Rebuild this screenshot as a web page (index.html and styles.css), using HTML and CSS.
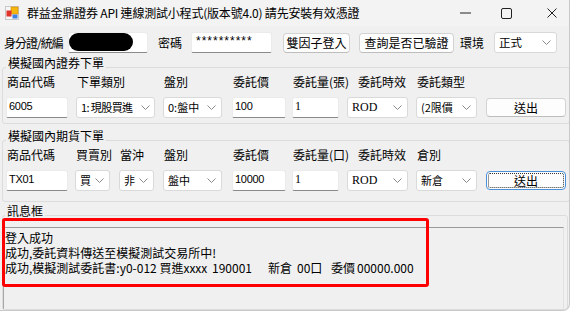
FILE: index.html
```html
<!DOCTYPE html>
<html lang="zh-Hant">
<head>
  <meta charset="UTF-8" />
  <title>群益金鼎證券 API 連線測試小程式</title>
  <link rel="stylesheet" href="styles.css">
</head>
<body>

  <div class="window">
    <div class="titlebar">
      <svg class="app-icon" width="14" height="14" viewBox="0 0 14 14">
        <rect x="0.5" y="0.5" width="13" height="13" fill="#f7f7f7" stroke="#c8c8c8"/>
        <rect x="6" y="1" width="7" height="7" fill="#f6b40e" stroke="#d98c00" stroke-width="0.6"/>
        <rect x="1.5" y="4.5" width="5" height="6" fill="#e0332b"/>
        <rect x="7.5" y="8.5" width="5" height="4" fill="#3f7fe0"/>
      </svg>
      <span class="title">群益金鼎證券 API 連線測試小程式(版本號4.0) 請先安裝有效憑證</span>
      <div class="win-controls">
        <span class="win-btn win-min">
          <svg width="11" height="2" viewBox="0 0 11 2"><line x1="0" y1="1" x2="11" y2="1" stroke="#222" stroke-width="1"/></svg>
        </span>
        <span class="win-btn win-max">
          <svg width="11" height="11" viewBox="0 0 11 11"><rect x="0.5" y="0.5" width="10" height="10" rx="1.5" fill="none" stroke="#222"/></svg>
        </span>
        <span class="win-btn win-close">
          <svg width="10" height="10" viewBox="0 0 10 10"><path d="M0.5 0.5 L9.5 9.5 M9.5 0.5 L0.5 9.5" stroke="#222" stroke-width="1"/></svg>
        </span>
      </div>
    </div>

    <div class="login-row">
      <span class="login-label id-label">身分證/統編</span>
      <div class="textbox id-box"><span class="redact"></span></div>
      <span class="login-label pw-label">密碼</span>
      <div class="textbox pw-box">**********</div>
      <button class="btn btn-2fa">雙因子登入</button>
      <button class="btn btn-check">查詢是否已驗證</button>
      <span class="login-label env-label">環境</span>
      <div class="combo env-combo">
        <span>正式</span>
        <svg width="9" height="5" viewBox="0 0 9 5"><polyline points="0.5,0.5 4.5,4.5 8.5,0.5" fill="none" stroke="#8a8a8a"/></svg>
      </div>
    </div>

    <fieldset class="group group-stock">
      <legend>模擬國內證券下單</legend>
      <div class="order-grid stock-grid">
        <span class="col-label">商品代碼</span>
        <span class="col-label">下單類別</span>
        <span class="col-label">盤別</span>
        <span class="col-label">委託價</span>
        <span class="col-label">委託量(張)</span>
        <span class="col-label shifted">委託時效</span>
        <span class="col-label">委託類型</span>
        <span></span>

        <div class="textbox num f-code">6005</div>
        <div class="combo f-type">
          <span>1: 現股買進</span>
          <svg width="9" height="5" viewBox="0 0 9 5"><polyline points="0.5,0.5 4.5,4.5 8.5,0.5" fill="none" stroke="#8a8a8a"/></svg>
        </div>
        <div class="combo f-session">
          <span>0:盤中</span>
          <svg width="9" height="5" viewBox="0 0 9 5"><polyline points="0.5,0.5 4.5,4.5 8.5,0.5" fill="none" stroke="#8a8a8a"/></svg>
        </div>
        <div class="textbox num f-price">100</div>
        <div class="textbox serif f-qty">1</div>
        <div class="combo f-tif">
          <span class="serif">ROD</span>
          <svg width="9" height="5" viewBox="0 0 9 5"><polyline points="0.5,0.5 4.5,4.5 8.5,0.5" fill="none" stroke="#8a8a8a"/></svg>
        </div>
        <div class="combo f-kind">
          <span>(2限價</span>
          <svg width="9" height="5" viewBox="0 0 9 5"><polyline points="0.5,0.5 4.5,4.5 8.5,0.5" fill="none" stroke="#8a8a8a"/></svg>
        </div>
        <button class="btn btn-send">送出</button>
      </div>
    </fieldset>

    <fieldset class="group group-futures">
      <legend>模擬國內期貨下單</legend>
      <div class="order-grid futures-grid">
        <span class="col-label">商品代碼</span>
        <span class="col-label">買賣別</span>
        <span class="col-label">當沖</span>
        <span class="col-label">盤別</span>
        <span class="col-label">委託價</span>
        <span class="col-label">委託量(口)</span>
        <span class="col-label shifted">委託時效</span>
        <span class="col-label">倉別</span>
        <span></span>

        <div class="textbox num f-code">TX01</div>
        <div class="combo f-side">
          <span>買</span>
          <svg width="9" height="5" viewBox="0 0 9 5"><polyline points="0.5,0.5 4.5,4.5 8.5,0.5" fill="none" stroke="#8a8a8a"/></svg>
        </div>
        <div class="combo f-side">
          <span>非</span>
          <svg width="9" height="5" viewBox="0 0 9 5"><polyline points="0.5,0.5 4.5,4.5 8.5,0.5" fill="none" stroke="#8a8a8a"/></svg>
        </div>
        <div class="combo f-session">
          <span>盤中</span>
          <svg width="9" height="5" viewBox="0 0 9 5"><polyline points="0.5,0.5 4.5,4.5 8.5,0.5" fill="none" stroke="#8a8a8a"/></svg>
        </div>
        <div class="textbox num f-price">10000</div>
        <div class="textbox serif f-qty">1</div>
        <div class="combo f-tif">
          <span class="serif">ROD</span>
          <svg width="9" height="5" viewBox="0 0 9 5"><polyline points="0.5,0.5 4.5,4.5 8.5,0.5" fill="none" stroke="#8a8a8a"/></svg>
        </div>
        <div class="combo f-kind">
          <span>新倉</span>
          <svg width="9" height="5" viewBox="0 0 9 5"><polyline points="0.5,0.5 4.5,4.5 8.5,0.5" fill="none" stroke="#8a8a8a"/></svg>
        </div>
        <button class="btn btn-send focused">送出</button>
      </div>
    </fieldset>

    <fieldset class="group group-msg">
      <legend>訊息框</legend>
      <div class="msg-box">
        <div class="msg-line">登入成功</div>
        <div class="msg-line">成功,委託資料傳送至模擬測試交易所中!</div>
        <div class="msg-line">
          <span class="msg-col c-main">成功,模擬測試委託書:y0-012 買進xxxx</span><span class="msg-col c-no">190001</span><span class="msg-col c-pos">新倉</span><span class="msg-col c-lot">00口</span><span class="msg-col c-tag">委價</span><span class="msg-col">00000.000</span>
        </div>
      </div>
    </fieldset>

    <div class="highlight"></div>
  </div>

</body>
</html>
```

FILE: styles.css
```css
* {
  margin: 0;
  padding: 0;
  box-sizing: border-box;
}

body {
  background: #fff;
  font-family: "Noto Sans CJK TC", "Noto Sans", sans-serif;
  font-size: 12px;
  color: #000;
}

.window {
  position: relative;
  width: 570px;
  height: 311px;
  background: #f0f0f0;
  border-right: 1px solid #c9c9c9;
  border-bottom: 1px solid #c9c9c9;
  border-bottom-right-radius: 7px;
  overflow: hidden;
}

/* title bar */
.titlebar {
  height: 26px;
  background: #f3f3f3;
  display: flex;
  align-items: center;
}

.app-icon {
  margin: 0 8px 0 5px;
}

.title {
  line-height: 14px;
  white-space: nowrap;
  letter-spacing: -0.2px;
}

.win-controls {
  margin-left: auto;
  display: flex;
  height: 26px;
}

.win-btn {
  display: flex;
  align-items: center;
  justify-content: center;
  height: 26px;
}

.win-min { width: 44px; }
.win-max { width: 38px; }

.win-close {
  width: 44px;
  justify-content: flex-end;
  padding-right: 12px;
}

/* login row */
.login-row {
  margin-top: 6px;
  height: 21px;
  padding-left: 4px;
  display: flex;
  align-items: center;
}

.login-label {
  line-height: 14px;
  white-space: nowrap;
}

.id-label {
  width: 64px;
  letter-spacing: -1px;
}

.pw-label { width: 33px; margin-left: 10px; }
.env-label { width: 34px; margin-left: 6px; }

.textbox {
  height: 21px;
  background: #fff;
  border: 1px solid #ebebeb;
  border-bottom-color: #8a8a8a;
  border-radius: 3px 3px 2px 2px;
  padding: 1px 2px 0;
  line-height: 15px;
  white-space: nowrap;
  overflow: hidden;
}

.id-box {
  width: 80px;
  padding: 0;
}

.redact {
  display: block;
  width: 64px;
  height: 18px;
  background: #000;
  border-radius: 9px;
}

.pw-box {
  width: 81px;
  padding-left: 4px;
  font-family: "Liberation Sans", sans-serif;
  letter-spacing: 1px;
}

.btn {
  height: 20px;
  background: #fdfdfd;
  border: 1px solid #d3d3d3;
  border-bottom-color: #bdbdbd;
  border-radius: 4px;
  font-family: inherit;
  font-size: 12px;
  line-height: 16px;
  color: #000;
}

.btn-2fa { width: 67px; margin-left: 11px; }
.btn-check { width: 95px; margin-left: 9px; }

.combo {
  height: 21px;
  background: #fff;
  border: 1px solid #d9d9d9;
  border-radius: 3px;
  padding: 0 5px 0 4px;
  display: flex;
  align-items: center;
  justify-content: space-between;
  font-size: 11px;
  line-height: 15px;
  white-space: nowrap;
  overflow: hidden;
}

.combo svg {
  flex: none;
}

.env-combo {
  width: 63px;
  font-size: 11.5px;
}

/* group boxes */
.group {
  width: 566px;
  margin-left: 2px;
  border: 1px solid #dcdcdc;
  border-radius: 3px;
}

.group legend {
  padding: 0 2px 8px;
  line-height: 14px;
}

.group-stock {
  margin-top: 3px;
  padding: 0 3px 5px;
}

.group-futures {
  margin-top: 5px;
  padding: 0 3px 10px;
}

.group-msg {
  margin-top: 2px;
  padding: 1px 3px 0 0;
}

.group-msg legend {
  margin-left: 2px;
}

.order-grid {
  display: grid;
  grid-template-rows: 14px 21px;
  row-gap: 8px;
  margin-top: -3px;
  align-items: center;
}

.stock-grid {
  grid-template-columns: 70px 87px 69px 60px 55px 69px 70px 80px;
}

.futures-grid {
  grid-template-columns: 69px 44px 44px 69px 60px 55px 69px 70px 80px;
}

.col-label {
  line-height: 14px;
  white-space: nowrap;
  padding-left: 1px;
}

.col-label.shifted {
  padding-left: 11px;
}

.num {
  font-family: "Liberation Sans", sans-serif;
  font-size: 11px;
  letter-spacing: -0.3px;
}

.serif {
  font-family: "Liberation Serif", serif;
  font-size: 12px;
}

.f-code { width: 62px; }

.f-type {
  width: 79px;
  padding-right: 4px;
  letter-spacing: -0.6px;
}

.f-session { width: 59px; }
.f-price { width: 54px; }
.f-qty { width: 47px; }
.f-tif { width: 61px; }
.f-kind { width: 61px; }
.f-side { width: 35px; }

.btn-send {
  width: 80px;
  height: 19px;
  line-height: 15px;
}

.btn-send.focused {
  border-color: #4a90d9;
  outline: 1px dotted #333;
  outline-offset: -3px;
}

/* message box */
.msg-box {
  height: 82px;
  background: #f0f0f0;
  border-top: 1px solid #9a9a9a;
  border-left: 1px solid #a8a8a8;
  border-right: 1px solid #e2e2e2;
  padding: 2px 0 0 1px;
}

.msg-line {
  line-height: 15px;
  white-space: nowrap;
}

.msg-col {
  display: inline-block;
}

.c-main { width: 207px; }
.c-no { width: 56px; }
.c-pos { width: 29px; }
.c-lot { width: 34px; }
.c-tag { width: 26px; }

/* annotation drawn over the screenshot */
.highlight {
  position: absolute;
  left: 2px;
  top: 218px;
  width: 427px;
  height: 69px;
  border: 3px solid #f00;
  border-radius: 3px;
}
```
